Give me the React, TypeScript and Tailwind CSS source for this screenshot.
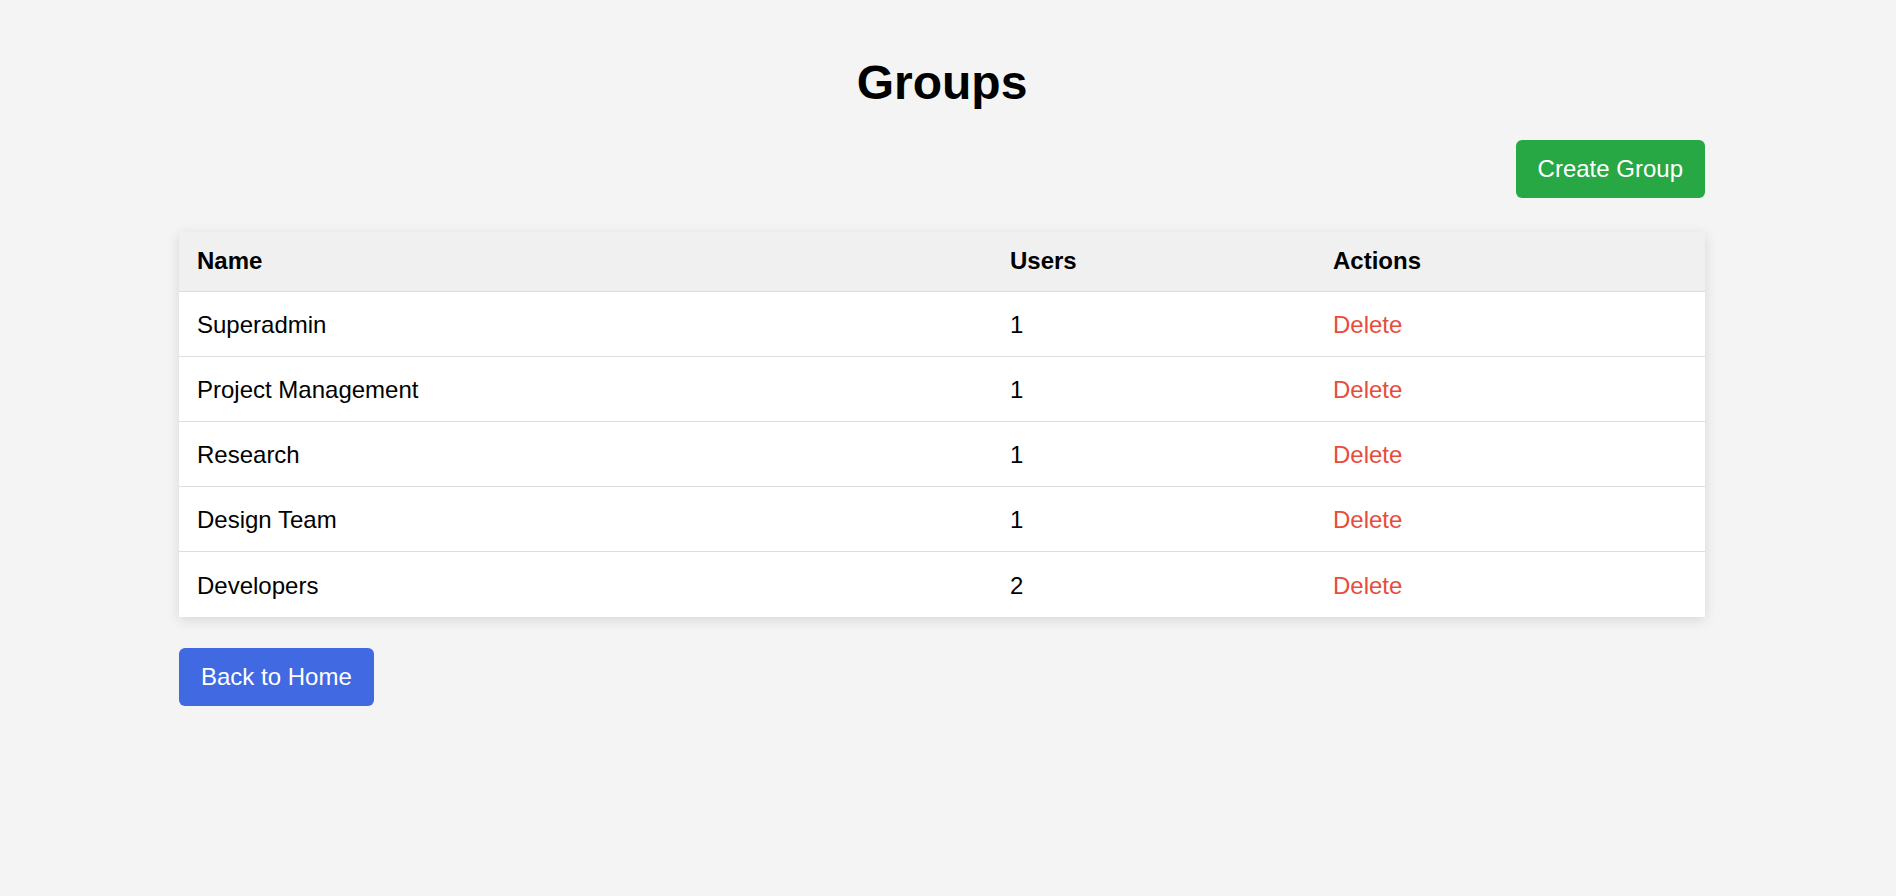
import React from 'react';

type Group = {
  name: string;
  users: number;
};

const groups: Group[] = [
  { name: 'Superadmin', users: 1 },
  { name: 'Project Management', users: 1 },
  { name: 'Research', users: 1 },
  { name: 'Design Team', users: 1 },
  { name: 'Developers', users: 2 },
];

const App: React.FC = () => {
  return (
    <div className="min-h-screen bg-[#f4f4f4] text-black font-['Liberation_Sans',Arial,sans-serif]">
      <div className="pl-[179px] pt-[55px] pb-10">
        <div className="w-[1526px]">
          {/* Title */}
          <h1 className="text-center text-[48px] leading-[55px] font-bold">Groups</h1>

          {/* Toolbar */}
          <div className="flex justify-end mt-[30px]">
            <button className="h-[58px] px-[22px] rounded-[6px] bg-[#28a745] text-white text-[24px]">
              Create Group
            </button>
          </div>

          {/* Table */}
          <div className="mt-[34px] bg-white shadow-[0_3px_12px_rgba(0,0,0,0.12)]">
            <div className="grid grid-cols-[813px_323px_390px] h-[60px] items-center pb-[2px] bg-[#f0f0f0] border-b border-[#dddddd] text-[24px] font-bold">
              <div className="px-[18px]">Name</div>
              <div className="px-[18px]">Users</div>
              <div className="px-[18px]">Actions</div>
            </div>
            {groups.map((group, i) => (
              <div
                key={group.name}
                className={`grid grid-cols-[813px_323px_390px] h-[65px] items-center pt-[2px] text-[24px] ${
                  i < groups.length - 1 ? 'border-b border-[#dddddd]' : ''
                }`}
              >
                <div className="px-[18px]">{group.name}</div>
                <div className="px-[18px]">{group.users}</div>
                <div className="px-[18px]">
                  <button className="text-[#e74c3c]">Delete</button>
                </div>
              </div>
            ))}
          </div>

          {/* Footer */}
          <div className="mt-[31px]">
            <button className="h-[58px] px-[22px] rounded-[6px] bg-[#4169e1] text-white text-[24px]">
              Back to Home
            </button>
          </div>
        </div>
      </div>
    </div>
  );
};

export default App;
